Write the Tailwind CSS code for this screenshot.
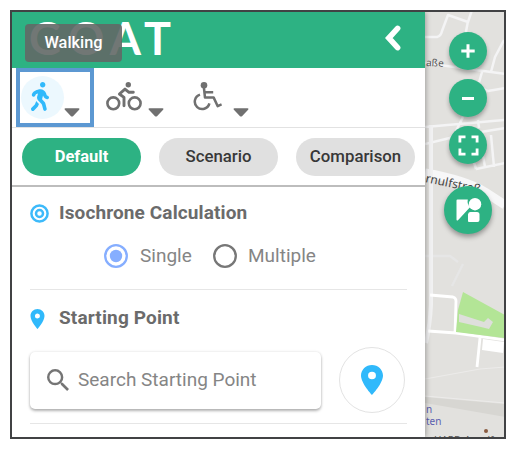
<!DOCTYPE html>
<html lang="en">
<head>
<meta charset="utf-8">
<title>GOAT</title>
<script src="https://cdn.jsdelivr.net/npm/@tailwindcss/browser@4"></script>
</head>
<body class="bg-white font-['Roboto',sans-serif] h-[449px] overflow-hidden pl-[10px] pt-[10px]">
<div class="relative flex w-[496px] h-[429px] border-2 border-[#414244] overflow-hidden">
  <main class="relative z-10 w-[413px] shrink-0 bg-white shadow-[1px_0_5px_rgba(0,0,0,0.3)] flex flex-col">
    <header class="h-14 shrink-0 bg-[#2db283] flex items-center justify-between pl-[17px] pr-[24px]">
      <div class="font-['Lato',sans-serif] font-bold text-white text-[45px] leading-none tracking-[6.3px] -mt-[4px]">GOAT</div>
      <svg class="w-4 h-[26px] -mt-[5px]" viewBox="0 0 16 26" fill="none" stroke="#fff" stroke-width="5.6" stroke-linecap="round" stroke-linejoin="miter"><path d="M12.6 3.4 3.8 13l8.8 9.6"/></svg>
    </header>

    <nav class="h-[60px] shrink-0 border-b border-[#e2e2e2] flex pl-1 text-[#707070]">
      <button class="w-[78px] h-[59px] border-4 border-[#5c98d2] flex items-start pl-px">
        <span class="w-[43px] h-[43px] mt-[4px] rounded-full bg-[#ecf8fe] flex items-center justify-center text-[#30b9fb]">
          <svg class="w-[18px] h-[29px] -ml-[5px] -mt-[3px]" viewBox="0 0 320 512" fill="currentColor"><path d="M208 96c26.5 0 48-21.5 48-48S234.5 0 208 0s-48 21.5-48 48 21.5 48 48 48zm94.5 149.1l-23.3-11.8-9.7-29.4c-14.7-44.6-55.7-75.8-102.2-75.9-36-.1-55.9 10.1-93.3 25.2-21.6 8.7-39.3 25.2-49.7 46.2L17.6 213c-7.8 15.8-1.5 35 14.2 42.9 15.6 7.9 34.6 1.5 42.5-14.3L81 228c3.5-7 9.3-12.5 16.5-15.4l26.8-10.8-15.2 60.7c-5.2 20.8.4 42.9 14.9 58.8l59.9 65.4c7.2 7.9 12.3 17.4 14.9 27.7l18.3 73.3c4.3 17.1 21.7 27.6 38.8 23.3 17.1-4.3 27.6-21.7 23.3-38.8l-22.2-89c-2.6-10.3-7.7-19.9-14.9-27.7l-45.5-49.7 17.2-68.7 5.5 16.5c5.3 16.1 16.7 29.4 31.7 37l23.3 11.8c15.6 7.9 34.6 1.5 42.5-14.3 7.7-15.7 1.4-35.1-14.3-43zM73.6 385.8c-3.2 8.1-8 15.4-14.2 21.5l-50 50.1c-12.5 12.5-12.5 32.8 0 45.3s32.7 12.5 45.2 0l59.4-59.4c6.1-6.1 10.9-13.4 14.2-21.5l13.5-33.8c-55.3-60.3-38.7-41.8-47.4-53.7l-20.7 51.5z"/></svg>
        </span>
        <svg class="w-4 h-[9px] mt-[36px]" viewBox="0 0 16 9" fill="currentColor"><path d="M1.5.3h13q1.6.2.6 1.4L9 8.2q-1 .8-2 0L.9 1.7Q-.1.5 1.5.3"/></svg>
      </button>
      <button class="flex items-start ml-[12px] pt-[14px]">
        <svg class="w-9 h-[29px]" viewBox="0 0 36 29" fill="none" stroke="currentColor" stroke-width="2.6" stroke-linejoin="round" stroke-linecap="round"><circle cx="7.3" cy="21.3" r="5.9"/><circle cx="28.7" cy="21.3" r="5.9"/><circle cx="22.3" cy="2.8" r="2.7" fill="currentColor" stroke="none"/><path d="M27.3 10.3H23l-4-3.2-5.6 4.9 4.6 3.4v8.4" stroke-width="2.9"/></svg>
        <svg class="w-4 h-[9px] ml-[6px] mt-[26px]" viewBox="0 0 16 9" fill="currentColor"><path d="M1.5.3h13q1.6.2.6 1.4L9 8.2q-1 .8-2 0L.9 1.7Q-.1.5 1.5.3"/></svg>
      </button>
      <button class="flex items-start ml-[29px] pt-[14px]">
        <svg class="w-[29px] h-[29px]" viewBox="0 0 29 29" fill="none" stroke="currentColor" stroke-width="2.5" stroke-linejoin="round"><circle cx="11" cy="3.3" r="3.3" fill="currentColor" stroke="none"/><path d="M10.8 4.5 12 15.6h8.7l4 8.6 3.9-1.8M11.6 10.3h8.6"/><path d="M7 12.6a7.4 7.4 0 1 0 9.4 8.8"/></svg>
        <svg class="w-4 h-[9px] ml-[11px] mt-[26px]" viewBox="0 0 16 9" fill="currentColor"><path d="M1.5.3h13q1.6.2.6 1.4L9 8.2q-1 .8-2 0L.9 1.7Q-.1.5 1.5.3"/></svg>
      </button>
    </nav>

    <div class="h-[59px] shrink-0 border-b-2 border-[#bdbdbd] flex items-center gap-[18px] pl-[10px] text-[16.8px] font-medium text-[#383838]">
      <button class="w-[119px] h-[38px] rounded-full bg-[#2db283] text-white font-bold text-[16.5px] pt-px">Default</button>
      <button class="w-[119px] h-[38px] rounded-full bg-[#e0e0e0] pt-px">Scenario</button>
      <button class="w-[119px] h-[38px] rounded-full bg-[#e0e0e0] pt-px">Comparison</button>
    </div>

    <section class="mx-[18px] h-[103px] shrink-0 border-b border-[#e6e6e6]">
      <div class="flex items-center h-[52px] text-[#6b6b6b]">
        <svg class="w-[19px] h-[19px] mr-[10px]" viewBox="0 0 19 19" fill="none" stroke="#3dbafa" stroke-width="2.5"><circle cx="9.5" cy="9.5" r="8.1"/><circle cx="9.5" cy="9.5" r="3.5"/></svg>
        <h2 class="text-[19px] font-bold tracking-[0.12px]">Isochrone Calculation</h2>
      </div>
      <div class="flex items-center h-[34px] pl-[74px] text-[19px] text-[#858585]">
        <svg class="w-6 h-6 mr-[12px]" viewBox="0 0 24 24"><circle cx="12" cy="12" r="10.8" fill="none" stroke="#86aeff" stroke-width="2.3"/><circle cx="12" cy="12" r="6.2" fill="#86aeff"/></svg>
        <span class="w-[73px]">Single</span>
        <svg class="w-6 h-6 mr-[11px]" viewBox="0 0 24 24"><circle cx="12" cy="12" r="10.8" fill="none" stroke="#777" stroke-width="2.3"/></svg>
        <span>Multiple</span>
      </div>
    </section>

    <section class="mx-[18px] h-[134px] shrink-0 border-b border-[#e6e6e6]">
      <div class="flex items-center h-[57px] text-[#6b6b6b]">
        <svg class="w-[15px] h-[20px] mr-[14px]" viewBox="5 2 14 20" fill="#30b9fb"><path d="M12 2C8.13 2 5 5.13 5 9c0 5.25 7 13 7 13s7-7.75 7-13c0-3.87-3.13-7-7-7zm0 9.5a2.5 2.5 0 1 1 0-5 2.5 2.5 0 0 1 0 5z"/></svg>
        <h2 class="text-[19px] font-bold tracking-[0.15px]">Starting Point</h2>
      </div>
      <div class="flex items-center">
        <div class="w-[291px] h-[57px] rounded-[5px] bg-white shadow-[0_2px_3px_rgba(0,0,0,0.28),0_0_3px_rgba(0,0,0,0.12)] flex items-center pl-[17px] text-[19px] text-[#858585]">
          <svg class="w-[22px] h-[22px] mr-[9px]" viewBox="3 3 17.5 17.5" fill="#757575"><path d="M15.5 14h-.79l-.28-.27A6.47 6.47 0 0 0 16 9.5 6.5 6.5 0 1 0 9.5 16c1.61 0 3.09-.59 4.23-1.57l.27.28v.79l5 4.99L20.49 19l-4.99-5zm-6 0C7.01 14 5 11.99 5 9.5S7.01 5 9.5 5 14 7.01 14 9.5 11.99 14 9.5 14z"/></svg>
          <span>Search Starting Point</span>
        </div>
        <button class="ml-[18px] w-[66px] h-[66px] rounded-full border border-[#e3e3e3] flex items-center justify-center">
          <svg class="w-[22px] h-[30px]" viewBox="5 2 14 20" preserveAspectRatio="none" fill="#30b9fb"><path d="M12 2C8.13 2 5 5.13 5 9c0 5.25 7 13 7 13s7-7.75 7-13c0-3.87-3.13-7-7-7zm0 9.5a2.5 2.5 0 1 1 0-5 2.5 2.5 0 0 1 0 5z"/></svg>
        </button>
      </div>
    </section>
  </main>

  <aside class="relative w-[79px] h-[425px] bg-[#e2e1de]">
    <svg class="w-[79px] h-[425px]" viewBox="425 12 79 425" fill="none" stroke-linejoin="round">
      <g stroke="#f4f4f5" stroke-width="2.5">
        <path d="M425 37h12q4-1 5-6l6-16 20 7 4-12M468 21l-3 16"/>
        <path d="M425 63l66 9 15 2M504 40l-9 17-4 15M482 72l-4 14 10 5 18-3M463 117l-7 14M425 127l80-7M425 144l37-9 44-7M478 120l1 8M470 150l6 19M480 140l5 27M491 135l3 32M476 169l29-6"/>
        <path d="M425 256h25l8 6M452 286l11-22" stroke="#e6e6e6"/>
      </g>
      <g stroke="#fff">
        <path d="M425 173q40 7 60 19l20 13" stroke-width="9" stroke="#f7f7f8"/>
        <path d="M431 125v180q-1 20-5 38" stroke-width="4" stroke="#f1f1f2"/>
        <path d="M430 295l23 2q3 1 3 4l-1 33M428 331l28 2 49 7M480 338l-3 29" stroke-width="2.8"/>
      </g>
      <path d="M463 292l42 23v23l-49-6 2-22z" fill="#b3e596"/>
      <path d="M459 314l25 8 4-4 5 4-4 7-8-2-22-5z" fill="#dedfdb"/>
      <path d="M483 339l21 3-1 11-21-3z" fill="#fff"/>
      <path d="M425 397l80 7v13l-80-14z" fill="#d7d6d2"/>
      <path d="M425 379l55-10 25-2M425 396l80 7" stroke="#ecebea"/>
      <circle cx="486" cy="431" r="2" fill="#8a5b40"/>
      <g font-family="Noto Sans, sans-serif" font-size="10">
        <text x="426" y="66" fill="#555" transform="rotate(2 426 66)">aße</text>
        <text x="425" y="182" fill="#444" font-size="12" transform="rotate(12 425 182)">rnulfstraß</text>
        <text x="426" y="413" fill="#5a5fb0">n</text>
        <text x="426" y="425" fill="#5a5fb0">ten</text>
        <text x="434" y="444" fill="#555">HARD-Arnulf</text>
      </g>
    </svg>
    <div class="absolute inset-x-0 top-[20px] flex flex-col items-center pl-[7px]">
      <button class="w-[38px] h-[38px] rounded-full bg-[#2db283] shadow-[0_3px_4px_rgba(0,0,0,0.3)] flex items-center justify-center"><svg class="w-[14px] h-[14px]" viewBox="0 0 14 14" stroke="#fff" stroke-width="3"><path d="M7 .3v13.4M.3 7h13.4"/></svg></button>
      <button class="w-[38px] h-[38px] mt-[9px] rounded-full bg-[#2db283] shadow-[0_3px_4px_rgba(0,0,0,0.3)] flex items-center justify-center"><svg class="w-3 h-[3px]" viewBox="0 0 12 3"><path fill="#fff" d="M0 0h12v3H0z"/></svg></button>
      <button class="w-[38px] h-[38px] mt-[9px] rounded-full bg-[#2db283] shadow-[0_3px_4px_rgba(0,0,0,0.3)] flex items-center justify-center"><svg class="w-[21px] h-[21px]" viewBox="0 0 21 21" fill="none" stroke="#fff" stroke-width="2.8"><path d="M1.9 7.5V1.9h5.6M13.5 1.9h5.6v5.6M19.1 13.5v5.6h-5.6M7.5 19.1H1.9v-5.6"/></svg></button>
      <button class="w-[48px] h-[48px] mt-[22px] rounded-full bg-[#2db283] shadow-[0_3px_5px_rgba(0,0,0,0.35)] flex items-center justify-center"><svg class="w-[27px] h-[27px]" viewBox="0 0 27 27" fill="#fff"><path d="M1.5 3.5q0-1 1-1h10.3a8 8 0 0 0 2.4 7.6L3 23.2q-1.5.8-1.5-.7zM13 17.3q.5-2.3 2.5-2.3h6.5q2.5 0 2.5 2.5V23q0 2-2 2H14q-1 0-1-1z"/><circle cx="20" cy="7.2" r="6.2"/></svg></button>
    </div>
  </aside>

  <div class="absolute z-20 left-[13px] top-[12px] w-[97px] h-[38px] rounded-[4px] bg-[#626866]/90 text-white text-[16.3px] font-medium flex items-center justify-center pt-px">Walking</div>
</div>
</body>
</html>
